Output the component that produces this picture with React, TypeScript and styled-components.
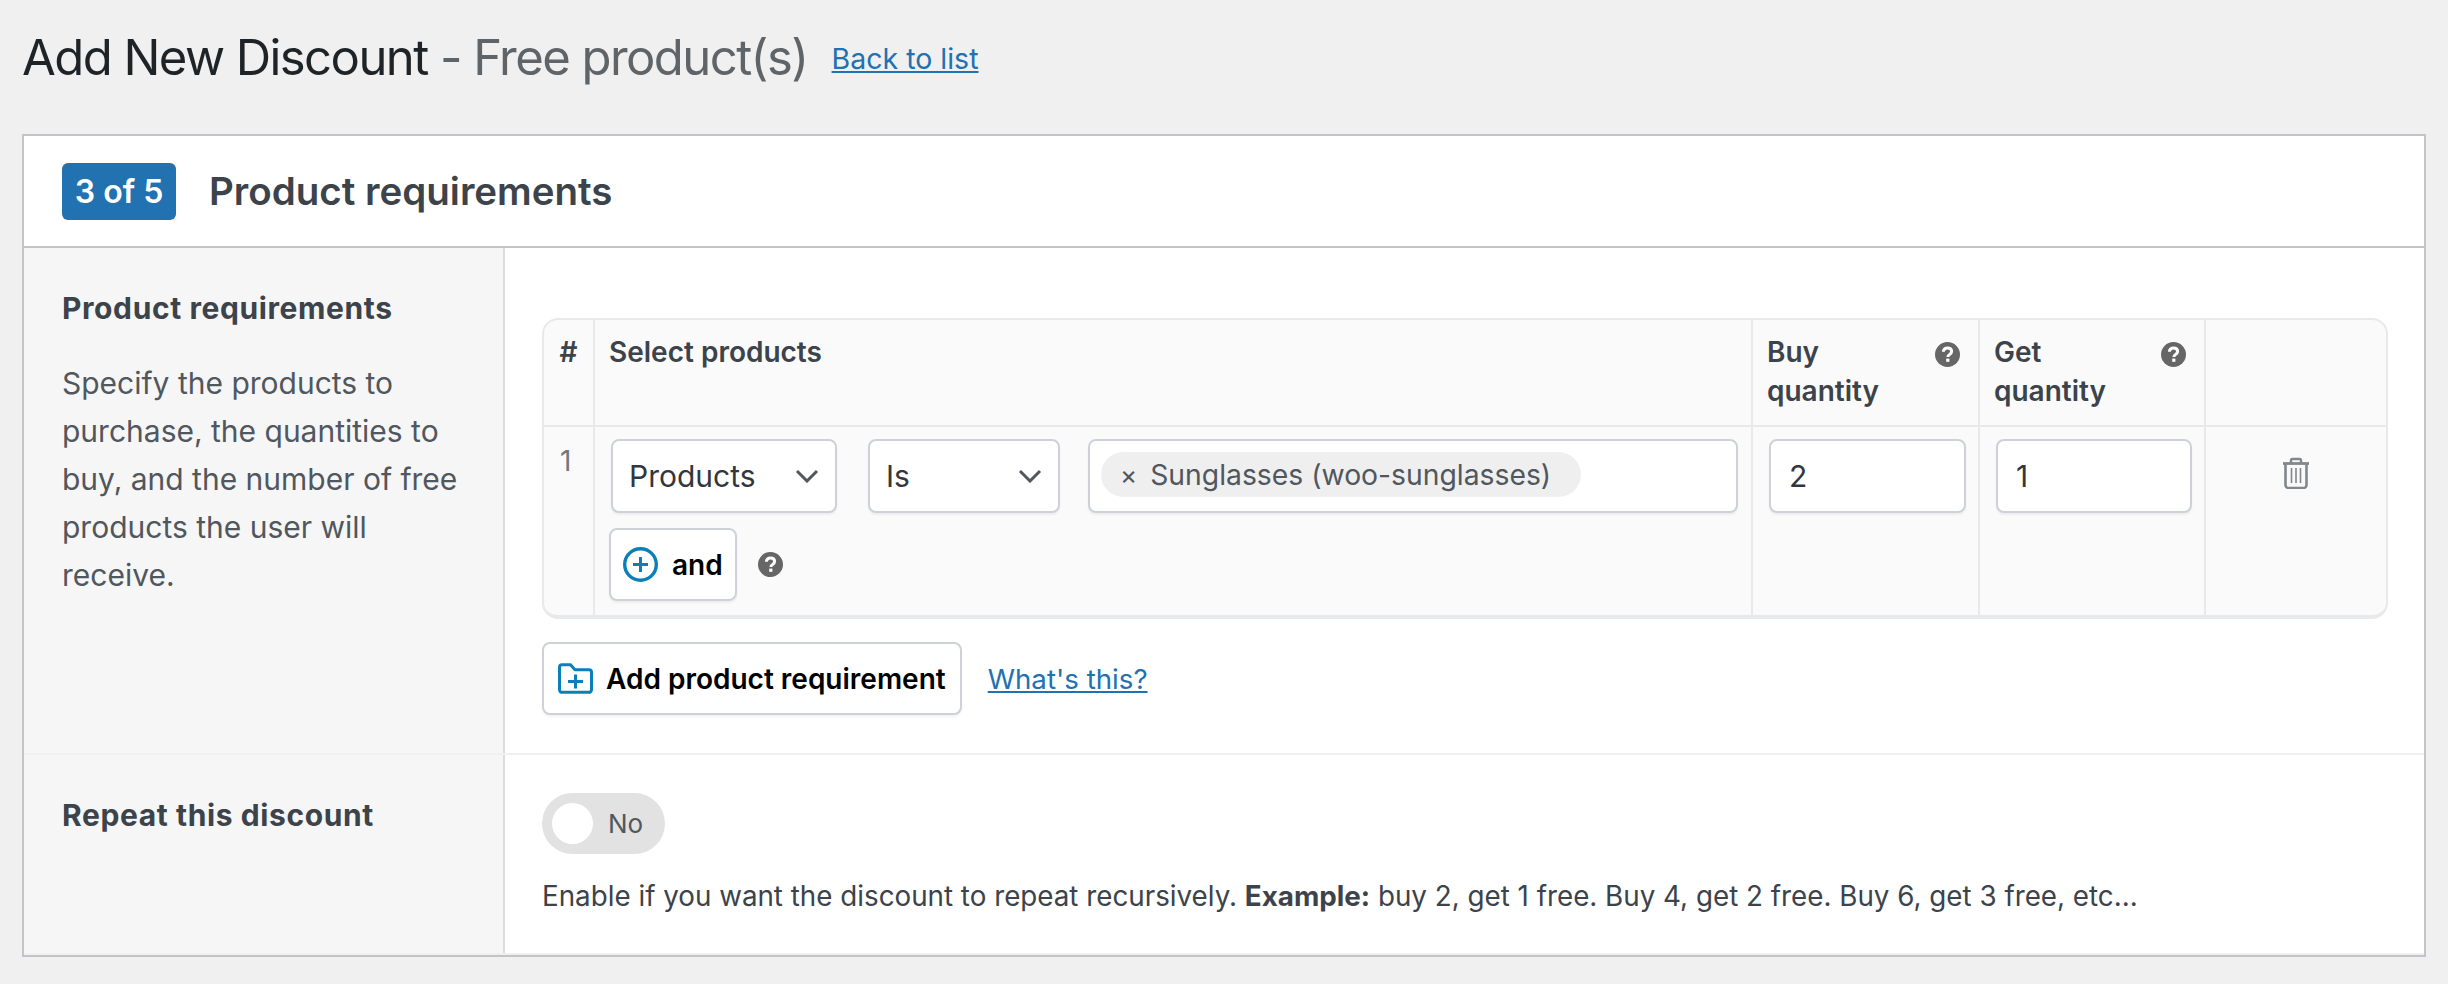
import React from 'react';
import styled, { createGlobalStyle } from 'styled-components';

const GlobalStyle = createGlobalStyle`
  html, body {
    margin: 0;
    padding: 0;
    background: #f0f0f0;
    font-family: Inter, "Noto Sans", sans-serif;
    color: #3c434a;
  }
  * {
    box-sizing: border-box;
  }
`;

const Page = styled.div`
  padding: 0 22px;
  width: 2448px;
  height: 984px;
`;

const TitleRow = styled.div`
  display: flex;
  align-items: center;
  height: 134px;
  padding-bottom: 18px;
`;

const Heading = styled.h1`
  margin: 0;
  font-size: 49px;
  line-height: 60px;
  letter-spacing: -1.55px;
  font-weight: 400;
  color: #1d2327;
`;

const HeadingSub = styled.span`
  color: #5f6468;
`;

const TextLink = styled.a<{ $gap: number; $size: number }>`
  margin-left: ${(props) => props.$gap}px;
  font-size: ${(props) => props.$size}px;
  color: #2271b1;
  text-decoration: underline;
`;

const Panel = styled.div`
  background: #fff;
  border: 2px solid #c3c4c7;
  height: 823px;
`;

const PanelHeader = styled.div`
  display: flex;
  align-items: center;
  gap: 33px;
  height: 112px;
  padding: 0 38px;
  border-bottom: 2px solid #c3c4c7;
`;

const StepBadge = styled.span`
  display: flex;
  align-items: center;
  justify-content: center;
  width: 114px;
  height: 57px;
  border-radius: 6px;
  background: #2271b1;
  color: #fff;
  font-size: 32px;
  font-weight: 600;
`;

const PanelTitle = styled.h2`
  margin: 0;
  font-size: 38.5px;
  font-weight: 600;
  color: #3c434a;
`;

const Section = styled.div<{ $height: number }>`
  display: grid;
  grid-template-columns: 481px 1fr;
  height: ${(props) => props.$height}px;
  border-bottom: 2px solid #f0f0f1;
`;

const Aside = styled.div<{ $top: number }>`
  background: #f6f6f6;
  border-right: 2px solid #dcdcde;
  padding: ${(props) => props.$top}px 38px 0;
`;

const AsideLabel = styled.div`
  font-size: 30px;
  line-height: 40px;
  letter-spacing: 0.6px;
  font-weight: 700;
  color: #3c434a;
`;

const AsideText = styled.p`
  margin: 31px 0 0;
  font-size: 30px;
  line-height: 48px;
  color: #50575e;
`;

const Content = styled.div<{ $top: number }>`
  padding: ${(props) => props.$top}px 36px 0 37px;
`;

const RuleTable = styled.table`
  width: 1846px;
  table-layout: fixed;
  border-collapse: separate;
  border-spacing: 0;
  background: #fafafa;
  border: 2px solid #e8e9ea;
  border-bottom-width: 4px;
  border-radius: 16px;
`;

const HeadCell = styled.th<{ $width?: number; $last?: boolean; $center?: boolean }>`
  width: ${(props) => (props.$width ? `${props.$width}px` : 'auto')};
  height: 107px;
  padding: ${(props) => (props.$center ? '13px 0 0' : '13px 18px 0 14px')};
  vertical-align: top;
  text-align: ${(props) => (props.$center ? 'center' : 'left')};
  font-size: 28px;
  line-height: 39px;
  font-weight: 600;
  color: #3c434a;
  border-bottom: 2px solid #e8e9ea;
  border-right: ${(props) => (props.$last ? 'none' : '2px solid #e8e9ea')};
`;

const HeadInner = styled.div`
  display: flex;
  justify-content: space-between;
  align-items: flex-start;

  svg {
    margin-top: 9px;
  }
`;

const BodyCell = styled.td<{ $last?: boolean; $center?: boolean; $narrow?: boolean }>`
  height: 188px;
  padding: ${(props) => (props.$center ? '30px 0 0' : props.$narrow ? '12px 13px 12px 16px' : '12px 12px 12px 16px')};
  vertical-align: top;
  text-align: ${(props) => (props.$center ? 'center' : 'left')};
  border-right: ${(props) => (props.$last ? 'none' : '2px solid #e8e9ea')};
`;

const RowNumber = styled.div`
  padding: 2px 0 0;
  font-size: 28px;
  line-height: 40px;
  color: #72777c;
`;

const ConditionRow = styled.div`
  display: flex;
  gap: 31px;
`;

const Field = styled.div<{ $width?: number }>`
  display: flex;
  align-items: center;
  justify-content: space-between;
  ${(props) => (props.$width ? `width: ${props.$width}px;` : 'flex: 1;')}
  height: 74px;
  padding: 0 18px;
  background: #fff;
  border: 2px solid #ced2d8;
  border-radius: 8px;
  box-shadow: 0 2px 2px rgba(0, 0, 0, 0.05);
  font-size: 30px;
  color: #32373c;
`;

const SelectField = styled(Field)`
  padding: 0 16px;
`;

const TagField = styled(Field)`
  justify-content: flex-start;
  margin-left: -3px;
`;

const TagPill = styled.span`
  display: inline-flex;
  align-items: center;
  gap: 13px;
  height: 45px;
  margin: -3px 0 0 -7px;
  padding: 0 30px 0 19px;
  border-radius: 23px;
  background: #efefef;
  font-size: 28.3px;
  color: #50575e;
`;

const TagRemove = styled.span`
  font-size: 26px;
  color: #50575e;
`;

const AndRow = styled.div`
  display: flex;
  align-items: center;
  gap: 21px;
  margin: 15px 0 0 -2px;
`;

const OutlineButton = styled.button<{ $gap: number; $pad: number }>`
  display: inline-flex;
  align-items: center;
  gap: ${(props) => props.$gap}px;
  height: 73px;
  padding: 0 ${(props) => props.$pad}px;
  background: #fff;
  border: 2px solid #ced2d8;
  border-radius: 8px;
  box-shadow: 0 2px 2px rgba(0, 0, 0, 0.05);
  font-family: inherit;
  font-size: 28px;
  font-weight: 600;
  color: #000;
`;

const ActionsRow = styled.div`
  display: flex;
  align-items: center;
  margin-top: 23px;
`;

const ToggleTrack = styled.div`
  display: flex;
  align-items: center;
  gap: 15px;
  width: 123px;
  height: 61px;
  padding-left: 10px;
  border-radius: 31px;
  background: #e2e2e2;
`;

const ToggleKnob = styled.span`
  width: 41px;
  height: 41px;
  border-radius: 50%;
  background: #fff;
`;

const ToggleLabel = styled.span`
  font-size: 26px;
  color: #50575e;
`;

const HelpText = styled.p`
  margin: 22px 0 0;
  font-size: 27.77px;
  line-height: 40px;
  color: #3c434a;
`;

const Chevron = () => (
  <svg width="24" height="14" viewBox="0 0 24 14" fill="none">
    <path d="M2 2l10 10L22 2" stroke="#50575e" strokeWidth="3" />
  </svg>
);

const HelpIcon = () => (
  <svg width="25" height="25" viewBox="0 0 25 25">
    <circle cx="12.5" cy="12.5" r="12.5" fill="#666" />
    <path
      d="M8.4 9.8c0-2.4 1.8-3.8 4.1-3.8s4.1 1.3 4.1 3.5c0 2.9-3.7 2.8-3.7 5.5"
      fill="none"
      stroke="#fff"
      strokeWidth="3"
    />
    <rect x="11.2" y="16.6" width="3.2" height="3.2" fill="#fff" />
  </svg>
);

const PlusCircle = () => (
  <svg width="35" height="35" viewBox="0 0 35 35" fill="none" stroke="#0a7fba">
    <circle cx="17.5" cy="17.5" r="15.8" strokeWidth="3.4" />
    <path d="M17.5 10v15M10 17.5h15" strokeWidth="3" />
  </svg>
);

const FolderPlus = () => (
  <svg width="35" height="31" viewBox="0 0 35 31" fill="none" stroke="#0a7fba">
    <path
      d="M4 1.7h8.5l4.5 5H31a2.5 2.5 0 0 1 2.5 2.5V26.8a2.5 2.5 0 0 1-2.5 2.5H4a2.5 2.5 0 0 1-2.5-2.5V4.2A2.5 2.5 0 0 1 4 1.7z"
      strokeWidth="3"
    />
    <path d="M17.5 11.5v14M10 18.5h15" strokeWidth="3" />
  </svg>
);

const TrashIcon = () => (
  <svg width="28" height="32" viewBox="0 0 28 32" fill="none" stroke="#82878c">
    <path d="M1 6.5h26" strokeWidth="2.8" />
    <path d="M9 6V3.5a1.5 1.5 0 0 1 1.5-1.5h7A1.5 1.5 0 0 1 19 3.5V6" strokeWidth="2.4" />
    <path d="M3.5 7v21a3 3 0 0 0 3 3h15a3 3 0 0 0 3-3V7" strokeWidth="2.6" />
    <path d="M9.5 11v15M14 11v15M18.5 11v15" strokeWidth="1.6" />
  </svg>
);

const App: React.FC = () => (
  <Page>
    <GlobalStyle />
    <TitleRow>
      <Heading>
        Add New Discount <HeadingSub>- Free product(s)</HeadingSub>
      </Heading>
      <TextLink href="#" $gap={24} $size={28.5}>
        Back to list
      </TextLink>
    </TitleRow>
    <Panel>
      <PanelHeader>
        <StepBadge>3 of 5</StepBadge>
        <PanelTitle>Product requirements</PanelTitle>
      </PanelHeader>
      <Section $height={507}>
        <Aside $top={40}>
          <AsideLabel>Product requirements</AsideLabel>
          <AsideText>
            Specify the products to purchase, the quantities to buy, and the number of free products the user will
            receive.
          </AsideText>
        </Aside>
        <Content $top={70}>
          <RuleTable>
            <thead>
              <tr>
                <HeadCell $width={51} $center>
                  #
                </HeadCell>
                <HeadCell>Select products</HeadCell>
                <HeadCell $width={227}>
                  <HeadInner>
                    <span>
                      Buy
                      <br />
                      quantity
                    </span>
                    <HelpIcon />
                  </HeadInner>
                </HeadCell>
                <HeadCell $width={226}>
                  <HeadInner>
                    <span>
                      Get
                      <br />
                      quantity
                    </span>
                    <HelpIcon />
                  </HeadInner>
                </HeadCell>
                <HeadCell $width={180} $last />
              </tr>
            </thead>
            <tbody>
              <tr>
                <BodyCell>
                  <RowNumber>1</RowNumber>
                </BodyCell>
                <BodyCell $narrow>
                  <ConditionRow>
                    <SelectField $width={226}>
                      Products
                      <Chevron />
                    </SelectField>
                    <SelectField $width={192}>
                      Is
                      <Chevron />
                    </SelectField>
                    <TagField>
                      <TagPill>
                        <TagRemove>×</TagRemove>
                        Sunglasses (woo-sunglasses)
                      </TagPill>
                    </TagField>
                  </ConditionRow>
                  <AndRow>
                    <OutlineButton $gap={14} $pad={12}>
                      <PlusCircle />
                      and
                    </OutlineButton>
                    <HelpIcon />
                  </AndRow>
                </BodyCell>
                <BodyCell>
                  <Field>2</Field>
                </BodyCell>
                <BodyCell>
                  <Field>1</Field>
                </BodyCell>
                <BodyCell $last $center>
                  <TrashIcon />
                </BodyCell>
              </tr>
            </tbody>
          </RuleTable>
          <ActionsRow>
            <OutlineButton $gap={13} $pad={14}>
              <FolderPlus />
              Add product requirement
            </OutlineButton>
            <TextLink href="#" $gap={26} $size={27.7}>
              What's this?
            </TextLink>
          </ActionsRow>
        </Content>
      </Section>
      <Section $height={200}>
        <Aside $top={40}>
          <AsideLabel>Repeat this discount</AsideLabel>
        </Aside>
        <Content $top={38}>
          <ToggleTrack>
            <ToggleKnob />
            <ToggleLabel>No</ToggleLabel>
          </ToggleTrack>
          <HelpText>
            Enable if you want the discount to repeat recursively. <b>Example:</b> buy 2, get 1 free. Buy 4, get 2 free.
            Buy 6, get 3 free, etc...
          </HelpText>
        </Content>
      </Section>
    </Panel>
  </Page>
);

export default App;
